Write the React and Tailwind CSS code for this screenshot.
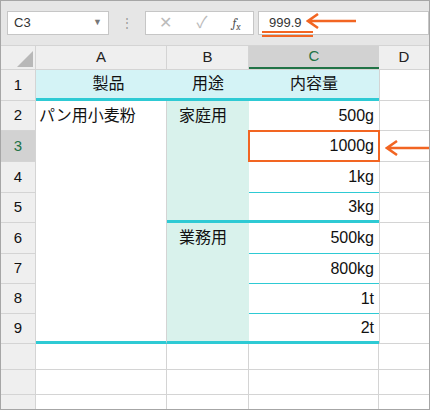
const F = { fontFamily: '"Liberation Sans","Noto Sans CJK JP",sans-serif' };
const rows = [
  { n: 1, a: "製品", b: "用途", c: "内容量", h: 31 },
  { n: 2, a: "パン用小麦粉", b: "家庭用", c: "500g", h: 30 },
  { n: 3, c: "1000g", h: 31 },
  { n: 4, c: "1kg", h: 31 },
  { n: 5, c: "3kg", h: 30 },
  { n: 6, b: "業務用", c: "500kg", h: 31 },
  { n: 7, c: "800kg", h: 30 },
  { n: 8, c: "1t", h: 30 },
  { n: 9, c: "2t", h: 30 },
];
export default function App() {
  return (
    <div className="w-[430px] h-[410px] bg-white relative overflow-hidden border border-[#a6a6a6]" style={F}>
      <div className="h-[45px] bg-[#e6e6e6] flex items-center border-b border-[#d4d4d4] text-[13px] text-[#333]">
        <div className="ml-[6px] w-[102px] h-[24px] bg-white border border-[#c6c6c6] flex items-center justify-between px-[6px]">
          <span>C3</span><span className="text-[9px] text-[#777]">▼</span>
        </div>
        <span className="ml-[12px] text-[#999] text-[12px]">⋮</span>
        <div className="ml-[12px] w-[109px] h-[24px] bg-white border border-[#c6c6c6] flex items-center justify-around text-[#bbb]">
          <span className="text-[16px]">✕</span><span className="text-[16px]">✓</span><span className="italic text-[#555] font-serif text-[13px]">f<sub>x</sub></span>
        </div>
        <div className="ml-[4px] flex-1 h-[24px] bg-white border border-[#c6c6c6] flex items-center pl-[10px] relative">
          <span>999.9</span>
          <div className="absolute left-[3px] top-[19px] w-[51px] h-[2px] bg-[#f26522]" />
          <div className="absolute left-[3px] top-[23px] w-[51px] h-[2px] bg-[#f26522]" />
        </div>
      </div>
      <div className="flex h-[24px] bg-[#efefef] border-b border-[#d4d4d4] text-[15px] text-[#222]">
        <div className="w-[35px] border-r border-[#d4d4d4] relative">
          <div className="absolute right-[2px] bottom-[2px] w-0 h-0 border-l-[16px] border-l-transparent border-b-[16px] border-b-[#b8b8b8]" />
        </div>
        <div className="w-[131px] border-r border-[#d4d4d4] flex items-center justify-center">A</div>
        <div className="w-[82px] border-r border-[#d4d4d4] flex items-center justify-center">B</div>
        <div className="w-[130px] bg-[#d2d2d2] border-b-2 border-[#217346] text-[#217346] flex items-center justify-center">C</div>
        <div className="flex-1 flex items-center justify-center">D</div>
      </div>
      {rows.map((r) => {
        const head = r.n === 1;
        const thickA = r.n === 1 || r.n === 9;
        const thickBC = r.n === 1 || r.n === 5 || r.n === 9;
        return (
          <div key={r.n} className="flex text-[16px] text-[#111]" style={{ height: r.h }}>
            <div className={`w-[35px] flex items-center justify-center border-r border-b border-[#d4d4d4] text-[15px] ${r.n === 3 ? "bg-[#d2d2d2] text-[#217346]" : "bg-[#efefef]"}`}>{r.n}</div>
            <div className={`w-[131px] flex ${head ? "bg-[#d4f3f6] justify-center items-center pl-[14px]" : "border-r border-[#d4d4d4] items-start pt-[3px] px-[3px]"} ${thickA ? "border-b-[3px] border-b-[#2ecad4]" : ""}`}>{r.a}</div>
            <div className={`w-[82px] flex px-[12px] ${head ? "bg-[#d4f3f6] justify-center items-center" : "bg-[#d9f2ec] items-start pt-[3px]"} ${thickBC ? "border-b-[3px] border-b-[#2ecad4]" : ""}`}>{r.b}</div>
            <div className={`w-[130px] flex items-center pr-[5px] relative ${head ? "bg-[#d4f3f6] justify-center pl-[5px]" : "justify-end"} ${thickBC ? "border-b-[3px] border-b-[#2ecad4]" : "border-b border-b-[#2ecad4]"}`}>
              {r.c}
              {r.n === 3 && <div className="absolute inset-[-1px] border-2 border-[#f26522]" />}
            </div>
            <div className="flex-1 border-l border-b border-[#d4d4d4]" />
          </div>
        );
      })}
      {[26, 25, 25].map((h, i) => (
        <div key={i} className="flex" style={{ height: h }}>
          <div className="w-[35px] bg-[#efefef] border-r border-b border-[#d4d4d4]" />
          <div className="w-[131px] border-r border-b border-[#d4d4d4]" />
          <div className="w-[82px] border-r border-b border-[#d4d4d4]" />
          <div className="w-[130px] border-r border-b border-[#d4d4d4]" />
          <div className="flex-1 border-b border-[#d4d4d4]" />
        </div>
      ))}
      <svg className="absolute left-[305px] top-[12px]" width="52" height="16" viewBox="0 0 52 16">
        <path d="M2 8H50M12 1L2 8L12 15" stroke="#f26522" strokeWidth="2.5" fill="none" />
      </svg>
      <svg className="absolute left-[384px] top-[139px]" width="46" height="16" viewBox="0 0 46 16">
        <path d="M2 8H46M12 1L2 8L12 15" stroke="#f26522" strokeWidth="2.5" fill="none" />
      </svg>
    </div>
  );
}
